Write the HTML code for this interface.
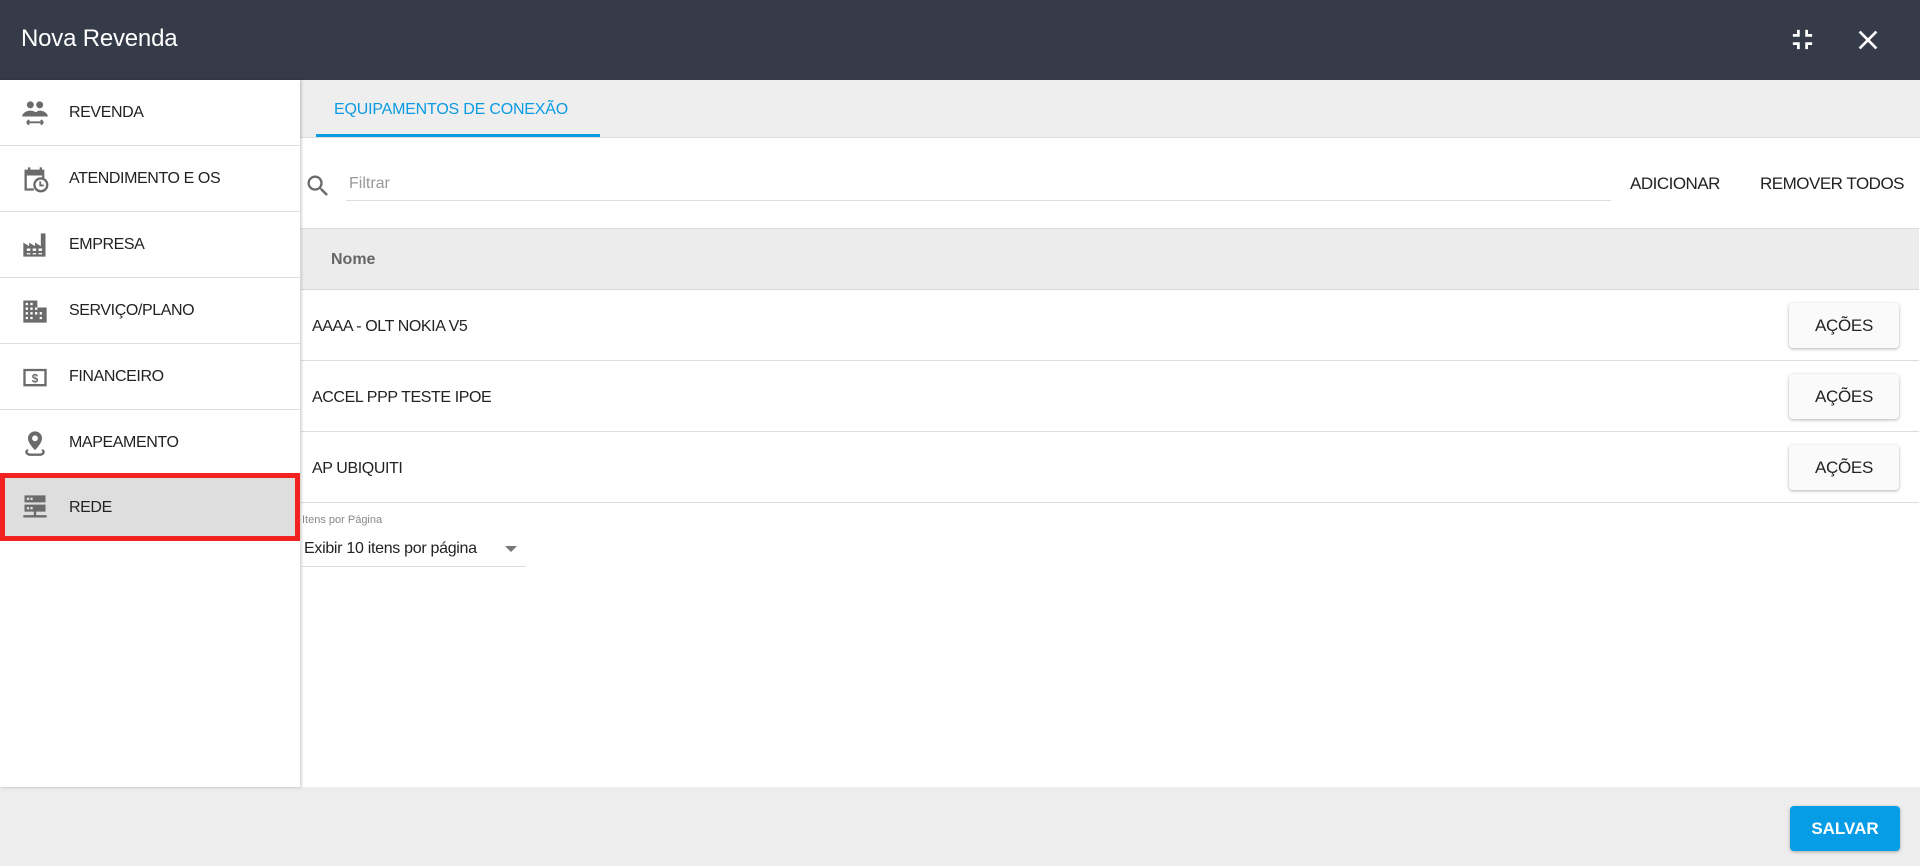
<!DOCTYPE html>
<html><head><meta charset="utf-8"><style>
*{box-sizing:border-box;margin:0;padding:0}
body{width:1920px;height:866px;overflow:hidden;font-family:"Liberation Sans",Arial,sans-serif;background:#fff;position:relative;color:#222}
.hdr{position:absolute;left:0;top:0;width:1920px;height:80px;background:#363b4a}
.hdr .t{position:absolute;left:21px;top:25px;font-size:24px;color:#fff;letter-spacing:-0.2px}
.side{position:absolute;left:0;top:80px;width:300px;height:707px;background:#fff;box-shadow:1px 0 3px rgba(0,0,0,.25);z-index:2}
.it{position:absolute;left:0;width:300px;height:66px;border-bottom:1px solid #ddd}
.it svg{position:absolute;left:21px;top:19px;width:28px;height:28px;fill:#6b6b6b}
.it span{position:absolute;left:69px;top:24px;font-size:16px;color:#222;letter-spacing:-0.4px}
.sel{background:#dedede;border:5px solid #f42121}
.tabs{position:absolute;left:300px;top:80px;width:1620px;height:58px;background:#eee;border-bottom:1px solid #ddd}
.tab{position:absolute;left:34px;top:21px;font-size:16px;color:#0b9be3;letter-spacing:-0.2px}
.ul{position:absolute;left:16px;top:54px;width:284px;height:3px;background:#0b9be3}
.inp{position:absolute;left:346px;top:170px;width:1265px;height:31px;border-bottom:1px solid #ddd;font-size:16px;color:#999;padding:5px 3px}
.btn{position:absolute;font-size:17px;color:#222;letter-spacing:-0.5px}
.th{position:absolute;left:301px;top:228px;width:1618px;height:62px;background:#ececec;border-bottom:1px solid #d8d8d8;border-top:1px solid #ddd}
.th span{position:absolute;left:30px;top:22px;font-size:16px;font-weight:bold;color:#666}
.row{position:absolute;left:301px;width:1618px;height:71px;border-bottom:1px solid #ddd;background:#fff}
.row span{position:absolute;left:11px;top:28px;font-size:16px;letter-spacing:-0.4px}
.row b{position:absolute;left:1488px;top:13px;width:110px;height:45px;background:#fafafa;border-radius:4px;box-shadow:0 1px 3px rgba(0,0,0,.3);font-weight:normal;font-size:17px;text-align:center;line-height:45px;letter-spacing:-0.3px}
.ft{position:absolute;left:0;top:787px;width:1920px;height:79px;background:#ededed}
.sv{position:absolute;left:1790px;top:19px;width:110px;height:45px;background:#069de6;border-radius:4px;color:#fff;font-weight:bold;font-size:17px;text-align:center;line-height:45px;box-shadow:0 1px 3px rgba(0,0,0,.3)}
</style></head><body>
<div class="hdr"><div class="t">Nova Revenda</div>
<svg style="position:absolute;left:1786px;top:23px" width="33" height="33" viewBox="0 0 24 24" fill="#fff"><path d="M5 16h3v3h2v-5H5v2zm3-8H5v2h5V5H8v3zm6 11h2v-3h3v-2h-5v5zm2-11V5h-2v5h5V8h-3z"/></svg>
<svg style="position:absolute;left:1852px;top:24px" width="32" height="32" viewBox="0 0 24 24" fill="#fff"><path d="M19 6.41L17.59 5 12 10.59 6.41 5 5 6.41 10.59 12 5 17.59 6.41 19 12 13.41 17.59 19 19 17.59 13.41 12z"/></svg>
</div>
<div class="side">
<div class="it" style="top:0"><svg viewBox="0 0 24 24"><circle cx="8" cy="5" r="3"/><circle cx="16" cy="5" r="3"/><path d="M1 15c0-3 4-5 7-5s7 2 7 5zM12 12c1-1 3-2 4-2 3 0 7 2 7 5H14z"/><path d="M5 20h14M5 20l2-2M5 20l2 2M19 20l-2-2M19 20l-2 2" stroke="#6b6b6b" stroke-width="1.6" fill="none"/></svg><span>REVENDA</span></div>
<div class="it" style="top:66px"><svg viewBox="0 0 24 24"><path d="M3 4h3V2h2v2h8V2h2v2h2v8h-2V9H5v11h6v2H3z"/><circle cx="17" cy="17" r="5.5" fill="none" stroke="#6b6b6b" stroke-width="2"/><path d="M16.5 14v3.5h3" stroke="#6b6b6b" stroke-width="1.6" fill="none"/></svg><span>ATENDIMENTO E OS</span></div>
<div class="it" style="top:132px"><svg viewBox="0 0 24 24"><path d="M2 22V10l5 3v-3l5 3v-3l5 3V2h4v20zM5 15v2h3v-2zm5 0v2h3v-2zm5 0v2h3v-2zM5 19v1h3v-1zm5 0v1h3v-1zm5 0v1h3v-1z" fill-rule="evenodd"/></svg><span>EMPRESA</span></div>
<div class="it" style="top:198px"><svg viewBox="0 0 24 24"><path d="M2 3h12v6h8v13H2zM4 5v2h2V5zm4 0v2h2V5zm-4 4v2h2V9zm4 0v2h2V9zm4 0v2h2V9zm-8 4v2h2v-2zm4 0v2h2v-2zm4 0v2h2v-2zm4 0v2h2v-2zm-12 4v2h2v-2zm4 0v2h2v-2zm8 0v2h2v-2z" fill-rule="evenodd"/></svg><span>SERVIÇO/PLANO</span></div>
<div class="it" style="top:264px"><svg viewBox="0 0 24 24"><path d="M2 5h20v15H2zm2 2v11h16V7z" fill-rule="evenodd"/><text x="12" y="16.5" font-size="10" font-weight="bold" text-anchor="middle" font-family="Liberation Sans">$</text></svg><span>FINANCEIRO</span></div>
<div class="it" style="top:330px"><svg viewBox="0 0 24 24"><path d="M12 2a6 6 0 0 0-6 6c0 4.5 6 10 6 10s6-5.5 6-10a6 6 0 0 0-6-6zm0 8.5a2.5 2.5 0 1 1 0-5 2.5 2.5 0 0 1 0 5z"/><path d="M6 18c-2 1-2 3 1 4h10c3-1 3-3 1-4" stroke="#6b6b6b" stroke-width="2" fill="none"/></svg><span>MAPEAMENTO</span></div>
<div class="it sel" style="top:393px;height:68px"><svg viewBox="0 0 24 24" style="left:16px;top:15px"><path d="M3 2h18v6H3zm0 8h18v6H3zm8 6h2v3h9v2h-9v0h-2H2v-2h9z"/><path d="M5 4h2v2H5zm3 0h2v2H8zM5 12h2v2H5zm3 0h2v2H8z" fill="#ddd"/></svg><span style="left:64px;top:21px">REDE</span></div>
</div>
<div class="tabs"><div class="tab">EQUIPAMENTOS DE CONEXÃO</div><div class="ul"></div></div>
<svg style="position:absolute;left:304px;top:172px" width="28" height="28" viewBox="0 0 24 24" fill="#6b6b6b"><path d="M15.5 14h-.79l-.28-.27A6.47 6.47 0 0 0 16 9.5 6.5 6.5 0 1 0 9.5 16c1.61 0 3.09-.59 4.23-1.57l.27.28v.79l5 4.99L20.49 19l-4.99-5zm-6 0C7.01 14 5 11.99 5 9.5S7.01 5 9.5 5 14 7.01 14 9.5 11.99 14 9.5 14z"/></svg>
<div class="inp">Filtrar</div>
<div class="btn" style="left:1630px;top:174px">ADICIONAR</div>
<div class="btn" style="left:1760px;top:174px">REMOVER TODOS</div>
<div class="th"><span>Nome</span></div>
<div class="row" style="top:290px"><span>AAAA - OLT NOKIA V5</span><b>AÇÕES</b></div>
<div class="row" style="top:361px"><span>ACCEL PPP TESTE IPOE</span><b>AÇÕES</b></div>
<div class="row" style="top:432px"><span>AP UBIQUITI</span><b>AÇÕES</b></div>
<div style="position:absolute;left:302px;top:514px;font-size:11px;color:#888">Itens por Página</div>
<div style="position:absolute;left:304px;top:540px;font-size:16px;letter-spacing:-0.3px">Exibir 10 itens por página</div>
<div style="position:absolute;left:505px;top:546px;width:0;height:0;border-left:6px solid transparent;border-right:6px solid transparent;border-top:6px solid #777"></div>
<div style="position:absolute;left:302px;top:566px;width:224px;height:1px;background:#ddd"></div>
<div class="ft"><div class="sv">SALVAR</div></div>
</body></html>
